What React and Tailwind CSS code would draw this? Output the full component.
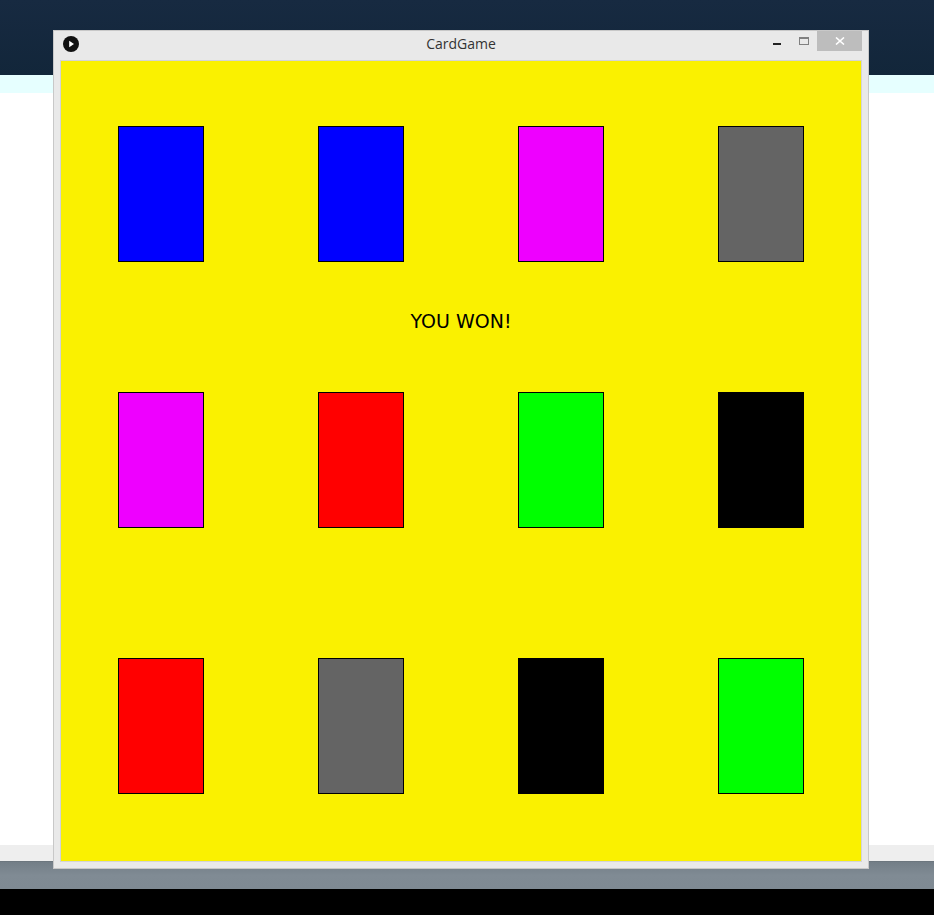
import React from "react";

const rows = [
  ["bg-[#0000ff]", "bg-[#0000ff]", "bg-[#ee00ff]", "bg-[#646464]"],
  ["bg-[#ee00ff]", "bg-[#ff0000]", "bg-[#00ff00]", "bg-[#000000]"],
  ["bg-[#ff0000]", "bg-[#646464]", "bg-[#000000]", "bg-[#00ff00]"],
];

function CardRow({ colors }) {
  return (
    <div className="grid grid-cols-4">
      {colors.map((c, i) => (
        <div key={i} className="flex justify-center">
          <div className={`w-[86px] h-[136px] border border-black ${c}`} />
        </div>
      ))}
    </div>
  );
}

export default function App() {
  return (
    <div className="relative w-[934px] h-[915px] overflow-hidden">
      <div className="flex flex-col h-full">
        <div className="h-[75px] bg-gradient-to-b from-[#172a41] to-[#12263a]" />
        <div className="h-[18px] bg-[#e6ffff]" />
        <div className="flex-1 bg-white" />
        <div className="h-[16px] bg-[#eeeeee]" />
        <div className="h-[28px] bg-gradient-to-b from-[#737e87] via-[#808b94] to-[#7f8a93] border-t border-[#6c767e]" />
        <div className="h-[26px] bg-black" />
      </div>

      <div className="absolute left-[53px] top-[30px] w-[816px] h-[839px] bg-[#e9e9e9] border border-[#c8c8c8] flex flex-col">
        <div className="grid grid-cols-[1fr_auto_1fr] h-[29px]">
          <div className="flex items-start">
            <svg className="ml-[9px] mt-[5px]" width="16" height="16" viewBox="0 0 16 16">
              <circle cx="8" cy="8" r="8" fill="#111" />
              <path d="M6.2 4.8 L11 8 L6.2 11.2 Z" fill="#fff" />
            </svg>
          </div>
          <div
            className="mt-[3px] text-[14px] leading-[20px] text-[#333]"
            style={{ fontFamily: '"Open Sans", "Noto Sans", sans-serif' }}
          >
            CardGame
          </div>
          <div className="flex items-start justify-end pr-[6px]">
            <div className="mt-[12px] w-[8px] h-[2px] bg-[#222]" />
            <div className="ml-[18px] mt-[6px] w-[10px] h-[8px] border border-[#808080] border-t-2" />
            <div className="ml-[8px] w-[45px] h-[20px] bg-[#bdbdbd] flex items-center justify-center">
              <svg width="10" height="8" viewBox="0 0 10 8">
                <path d="M1 0.5 L9 7.5 M9 0.5 L1 7.5" stroke="#fff" strokeWidth="1.6" />
              </svg>
            </div>
          </div>
        </div>

        <div className="mx-[6px] border border-[#d4d4d4]">
          <div className="w-[800px] h-[800px] bg-[#faf100] pt-[65px] flex flex-col">
            <CardRow colors={rows[0]} />
            <div className="h-[130px] pt-[48px]">
              <div
                className="text-center text-[19px] leading-[22px] text-black"
                style={{ fontFamily: '"DejaVu Sans", sans-serif' }}
              >
                YOU WON!
              </div>
            </div>
            <CardRow colors={rows[1]} />
            <div className="h-[130px]" />
            <CardRow colors={rows[2]} />
          </div>
        </div>
      </div>
    </div>
  );
}
